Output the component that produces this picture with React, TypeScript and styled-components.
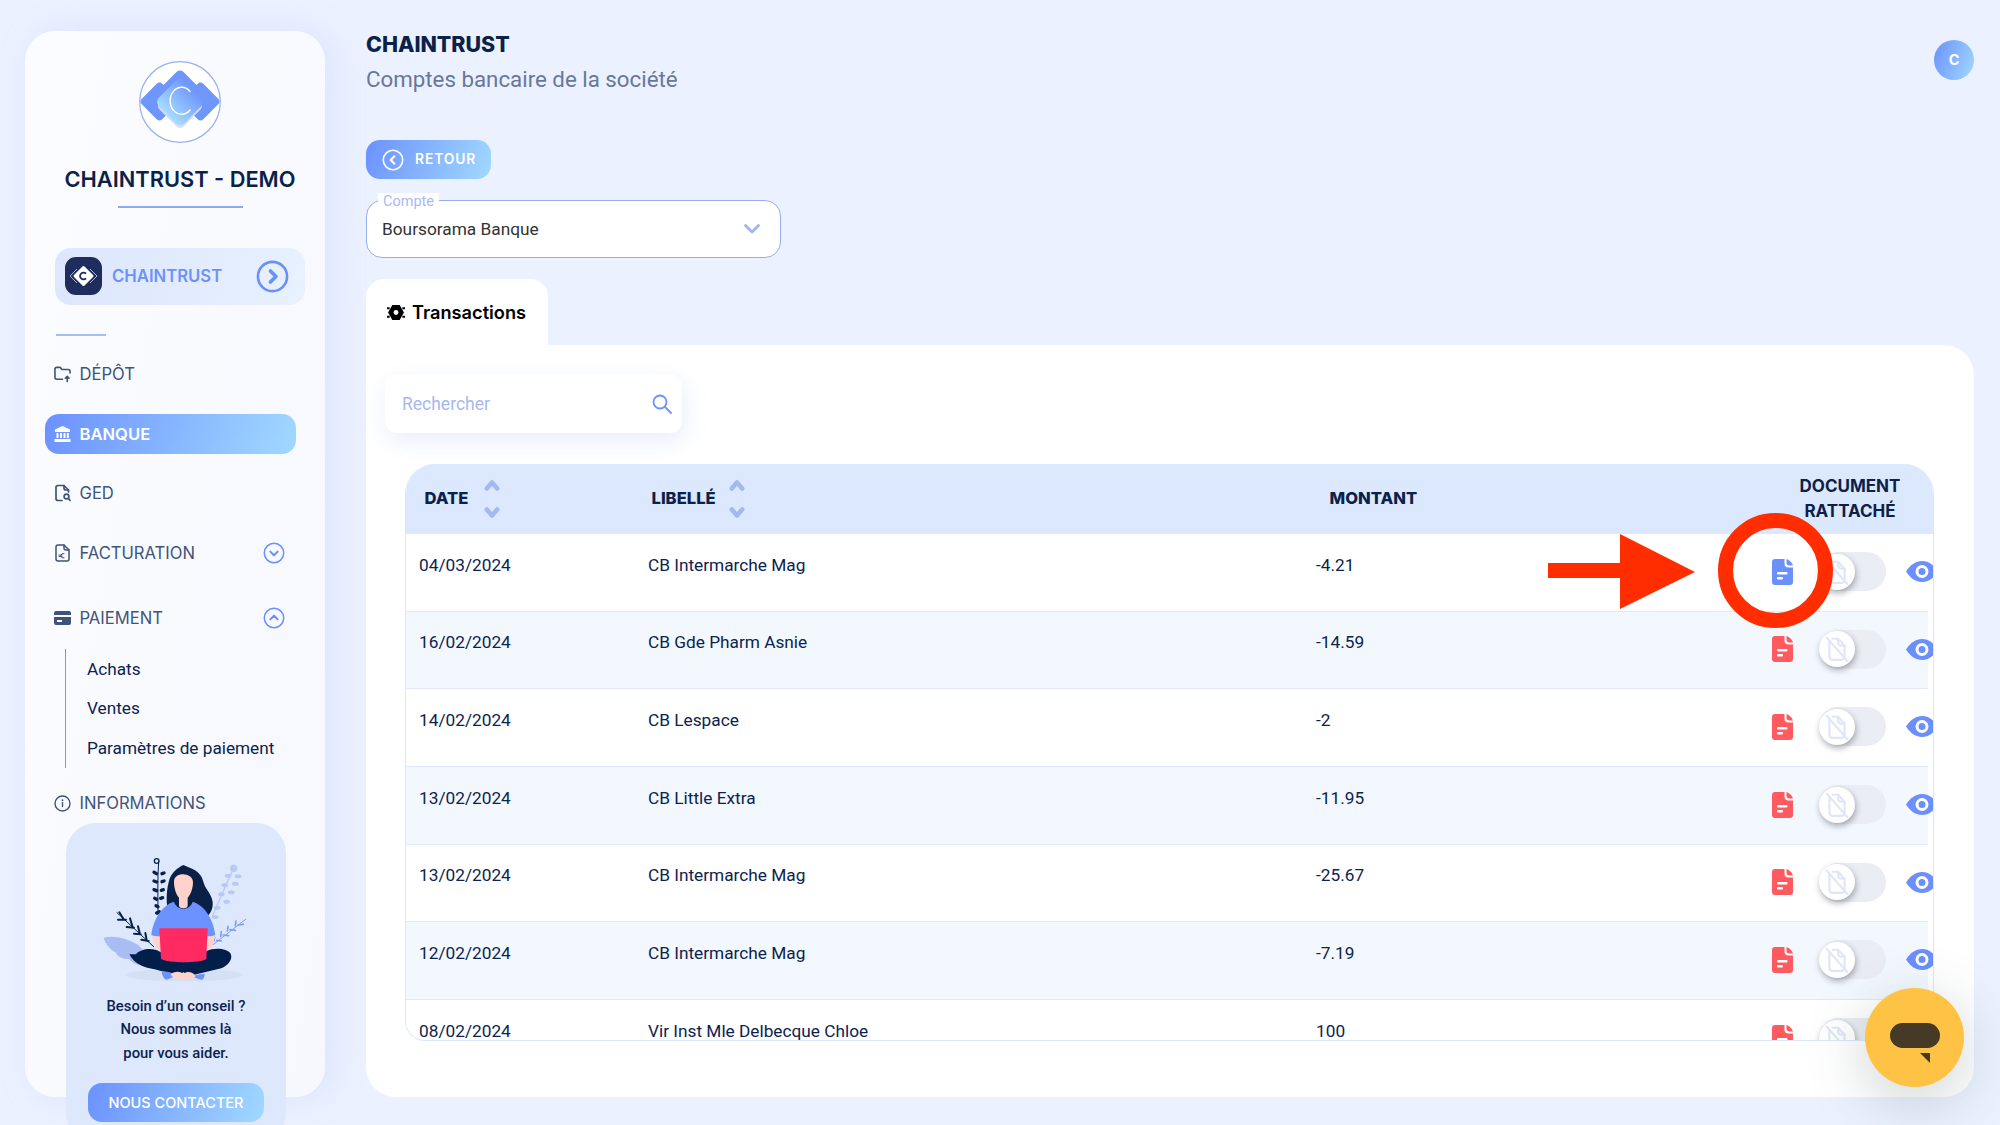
import React from 'react';
import styled, { createGlobalStyle } from 'styled-components';

const GlobalStyles = createGlobalStyle`
    html, body {
        margin: 0;
        padding: 0;
        height: 1125px;
        overflow: hidden;
        background: #ebf1ff;
        font-family: Roboto, 'Liberation Sans', sans-serif;
        color: #0c2350;
    }
    * {
        box-sizing: border-box;
    }
`;

const HEADING = `Inter, 'Open Sans', sans-serif`;
const GRADIENT = 'linear-gradient(110deg, #6b91ff 0%, #a1d9ff 100%)';

const Page = styled.div`
    position: relative;
    display: flex;
    align-items: flex-start;
    width: 2000px;
    height: 1125px;
    overflow: hidden;
`;

const Sidebar = styled.aside`
    flex: none;
    width: 300px;
    height: 1066px;
    margin: 31px 0 0 25px;
    padding: 30px 20px 0 30px;
    border-radius: 30px;
    background: linear-gradient(100deg, #fbfcff 0%, #f7f8fe 100%);
    box-shadow: 8px 0 30px rgba(190, 207, 250, 0.35);
    display: flex;
    flex-direction: column;
    > * {
        flex: none;
    }
`;

const LogoWrap = styled.div`
    display: flex;
    justify-content: center;
`;

const CompanyTitle = styled.h1`
    margin: 18.5px -10px 0;
    font: 600 21.8px/34px ${HEADING};
    color: #0b2149;
    text-align: center;
    white-space: nowrap;
`;

const TitleRule = styled.div`
    width: 125px;
    height: 2px;
    margin: 10.5px auto 0;
    background: #8fa9ef;
`;

const CompanyPill = styled.div`
    display: flex;
    align-items: center;
    width: 250px;
    height: 57px;
    margin-top: 39.5px;
    padding: 0 16px 0 10px;
    border-radius: 16px;
    background: linear-gradient(100deg, #dde6fc 0%, #e7f1ff 100%);
`;

const CompanyBadge = styled.div`
    flex: none;
    width: 37px;
    height: 38px;
    border-radius: 11px;
    background: #1f2d5e;
    display: flex;
    align-items: center;
    justify-content: center;
`;

const CompanyName = styled.span`
    flex: 1;
    margin-left: 10px;
    font: 600 16.7px/1 ${HEADING};
    color: #6b92fb;
`;

const ChevronSlot = styled.span`
    flex: none;
    display: flex;
    color: #6b8ffb;
`;

const ShortRule = styled.div`
    width: 50px;
    height: 2px;
    margin: 29px 0 0 1px;
    background: #a7bcf3;
`;

const Nav = styled.nav`
    display: flex;
    flex-direction: column;
    margin: 18.5px 0 0 -10px;
`;

const NavItem = styled.div<{ $active?: boolean; $mt?: number }>`
    display: flex;
    align-items: center;
    gap: 8.5px;
    width: 251px;
    height: 40px;
    margin-top: ${(p) => p.$mt ?? 0}px;
    padding: 0 11px 0 9px;
    border-radius: 14px;
    background: ${(p) => (p.$active ? GRADIENT : 'transparent')};
    color: ${(p) => (p.$active ? '#fff' : '#40537a')};
    font: ${(p) => (p.$active ? 600 : 400)} 16.6px/1 ${HEADING};
`;

const NavIcon = styled.span`
    flex: none;
    width: 17px;
    height: 18px;
    display: flex;
    align-items: center;
    justify-content: center;
`;

const NavLabel = styled.span`
    flex: 1;
`;

const SubMenu = styled.div`
    display: flex;
    flex-direction: column;
    height: 119px;
    margin: 11px 0 0 20px;
    padding-left: 21px;
    border-left: 1.5px solid #7596f5;
`;

const SubLink = styled.div`
    height: 39.5px;
    display: flex;
    align-items: center;
    font-size: 17.2px;
    color: #0c2350;
`;

const HelpCard = styled.div`
    width: 220px;
    height: 320px;
    margin-left: 11px;
    padding-top: 32px;
    border-radius: 30px;
    background: #dde8fd;
    display: flex;
    flex-direction: column;
    align-items: center;
`;

const HelpText = styled.p`
    margin: 10px 0 0;
    font-size: 14.8px;
    font-weight: 500;
    line-height: 23.4px;
    text-align: center;
    color: #0c2350;
`;

const HelpButton = styled.div`
    width: 176px;
    height: 39px;
    margin-top: 18px;
    border-radius: 14px;
    background: ${GRADIENT};
    color: #fff;
    font: 500 14.5px/39px ${HEADING};
    text-align: center;
`;

const Main = styled.main`
    flex: none;
    width: 1608px;
    margin-left: 41px;
    padding-top: 28px;
    display: flex;
    flex-direction: column;
`;

const Header = styled.header`
    display: flex;
    justify-content: space-between;
    align-items: flex-start;
`;

const PageTitle = styled.h2`
    margin: 0;
    font: 800 21.4px/33px ${HEADING};
    color: #0b2149;
`;

const PageSubtitle = styled.div`
    margin-top: 3px;
    font-size: 22.3px;
    line-height: 30px;
    color: #66789c;
`;

const Avatar = styled.div`
    width: 40px;
    height: 40px;
    margin-top: 12px;
    border-radius: 50%;
    background: ${GRADIENT};
    color: #fff;
    font: 700 14.5px/40px ${HEADING};
    text-align: center;
`;

const BackButton = styled.div`
    display: flex;
    align-items: center;
    gap: 11px;
    width: 125px;
    height: 39px;
    margin-top: 46px;
    padding-left: 16px;
    border-radius: 14px;
    background: ${GRADIENT};
    color: #fff;
    font: 600 13.8px/1 ${HEADING};
    letter-spacing: 0.9px;
`;

const BackLabel = styled.span`
    padding-top: 1px;
`;

const SelectBox = styled.div`
    position: relative;
    display: flex;
    align-items: center;
    justify-content: space-between;
    width: 415px;
    height: 58px;
    margin-top: 21px;
    padding: 0 20px 0 15px;
    border: 1.5px solid #96aef0;
    border-radius: 16px;
    background: #fff;
    font-size: 17.3px;
    color: #333;
`;

const SelectLabel = styled.span`
    position: absolute;
    top: -8px;
    left: 11px;
    padding: 0 5px;
    background: #fff;
    font-size: 14.5px;
    line-height: 17px;
    color: #a9baf0;
`;

const TabBar = styled.div`
    display: flex;
    margin-top: 21px;
`;

const Tab = styled.div`
    display: flex;
    align-items: flex-start;
    gap: 7px;
    width: 182px;
    height: 66px;
    padding: 21px 0 0 21px;
    border-radius: 18px 18px 0 0;
    background: #fff;
    color: #000;
    font: 600 18.2px/24px ${HEADING};
`;

const Card = styled.section`
    height: 752px;
    padding: 29px 40px 0 39px;
    border-radius: 0 30px 30px 30px;
    background: #fff;
`;

const SearchBox = styled.div`
    display: flex;
    align-items: center;
    justify-content: space-between;
    width: 297px;
    height: 59px;
    margin-left: -20px;
    padding: 1px 10px 0 17px;
    border-radius: 12px;
    background: #fff;
    box-shadow: 2px 8px 22px rgba(150, 175, 235, 0.22);
    font-size: 17.5px;
    color: #a6b9f2;
`;

const Table = styled.div`
    width: 1529px;
    height: 577px;
    margin-top: 31px;
    border: solid #dbe7fc;
    border-width: 0 1.5px 1.5px 1.5px;
    border-radius: 30px 30px 20px 20px;
    overflow: hidden;
`;

const HeadRow = styled.div`
    display: grid;
    grid-template-columns: 227px 678px 1fr 168px;
    align-items: center;
    height: 70px;
    margin: 0 -1.5px;
    padding: 0 0 1px 20px;
    background: #dce8fd;
    font: 800 16.6px/25px ${HEADING};
    color: #0b2149;
`;

const HeadCell = styled.div<{ $gap?: number }>`
    display: flex;
    align-items: center;
    gap: ${(p) => p.$gap ?? 16}px;
`;

const DocHead = styled.div`
    margin-left: -1px;
    text-align: center;
    font-size: 17px;
    font-weight: 700;
`;

const SortIcons = styled.span`
    display: flex;
    flex-direction: column;
    gap: 16px;
`;

const Row = styled.div<{ $alt: boolean }>`
    display: grid;
    grid-template-columns: 229px 668px 1fr 156px;
    width: 1522px;
    height: 77.7px;
    padding-left: 13px;
    border-bottom: 1.5px solid #dfe9fb;
    background: ${(p) => (p.$alt ? '#f3f8ff' : '#fff')};
    font-size: 17.25px;
    line-height: 22px;
    color: #0c2350;
`;

const Cell = styled.div`
    padding-top: 19.5px;
`;

const Actions = styled.div`
    display: flex;
    align-items: center;
    height: 75px;
`;

const ToggleTrack = styled.div`
    flex: none;
    width: 67px;
    height: 39px;
    margin: 0 20px 0 26px;
    border-radius: 20px;
    background: #ebedf4;
    display: flex;
    align-items: center;
`;

const ToggleKnob = styled.div`
    width: 36px;
    height: 36px;
    border-radius: 50%;
    background: #fff;
    box-shadow: 1px 3px 6px rgba(40, 40, 60, 0.38);
    display: flex;
    align-items: center;
    justify-content: center;
`;

const Annotation = styled.div`
    position: absolute;
    pointer-events: none;
`;

const ArrowMark = styled(Annotation)`
    left: 1548px;
    top: 533px;
    width: 148px;
    height: 76px;
`;

const CircleMark = styled(Annotation)`
    left: 1718px;
    top: 513px;
    width: 115px;
    height: 115px;
    border: 15px solid #ff2d00;
    border-radius: 50%;
`;

const ChatButton = styled.div`
    position: absolute;
    left: 1865px;
    top: 988px;
    width: 99px;
    height: 99px;
    padding-top: 10px;
    border-radius: 50%;
    background: #fec344;
    box-shadow: 0 14px 60px rgba(50, 80, 70, 0.25);
    display: flex;
    align-items: center;
    justify-content: center;
`;

const ChevronCircle = ({ size, dir, width = 1.6 }: { size: number; dir: 'up' | 'down' | 'left' | 'right'; width?: number }) => {
    const paths = {
        up: 'M8 13.5l4-4 4 4',
        down: 'M8 10.5l4 4 4-4',
        left: 'M13.5 8l-4 4 4 4',
        right: 'M10.5 8l4 4-4 4',
    };
    return (
        <svg width={size} height={size} viewBox="0 0 24 24" fill="none" stroke="currentColor" strokeWidth={width} strokeLinecap="round" strokeLinejoin="round">
            <circle cx="12" cy="12" r="10.6" />
            <path d={paths[dir]} strokeWidth={width * 1.4} />
        </svg>
    );
};

const Logo = () => (
    <svg width="82" height="82" viewBox="0 0 82 82">
        <defs>
            <linearGradient id="front" x1="0" y1="0" x2="0" y2="1">
                <stop offset="0" stopColor="#6f97fb" />
                <stop offset="1" stopColor="#a6dcff" />
            </linearGradient>
        </defs>
        <circle cx="41" cy="41" r="40.3" fill="#fff" stroke="#95aef2" strokeWidth="1.2" />
        <rect x="6" y="26" width="29" height="29" rx="4" transform="rotate(45 20.5 40.5)" fill="#6e96fb" />
        <rect x="47" y="26" width="29" height="29" rx="4" transform="rotate(45 61.5 40.5)" fill="#6e96fb" />
        <rect x="23" y="15" width="36" height="36" rx="5" transform="rotate(45 41 33)" fill="#6f97fb" />
        <rect x="24" y="28" width="34" height="34" rx="5" transform="rotate(45 41 45)" fill="#d4dcf8" />
        <rect x="23" y="23" width="36" height="36" rx="6" transform="rotate(45 41 41)" fill="url(#front)" />
        <path d="M51 30.5A11.5 13.5 0 1 0 51 49" fill="none" stroke="#fff" strokeWidth="1.4" strokeLinecap="round" />
    </svg>
);

const BadgeMark = () => (
    <svg width="31" height="24" viewBox="0 0 31 24">
        <path d="M9 5l-7 7 7 7M22 5l7 7-7 7" fill="none" stroke="#a9b3cf" strokeWidth="1" />
        <rect x="8" y="4.5" width="15" height="15" rx="1.5" transform="rotate(45 15.5 12)" fill="#fff" />
        <path d="M18 9.7a3.4 3.4 0 1 0 0 4.6" fill="none" stroke="#1f2d5e" strokeWidth="1.8" />
    </svg>
);

const IconStroke = { fill: 'none', stroke: 'currentColor', strokeWidth: 1.7, strokeLinecap: 'round', strokeLinejoin: 'round' } as const;

const FolderIcon = () => (
    <svg width="18" height="18" viewBox="0 0 18 18" {...IconStroke}>
        <path d="M9 14.5H3a2 2 0 0 1-2-2V4a2 2 0 0 1 2-2h3.5l2 2.2H15a2 2 0 0 1 2 2V8" />
        <path d="M14 17v-5M12 13.5l2-2 2 2" />
    </svg>
);

const BankIcon = () => (
    <svg width="17" height="16" viewBox="0 0 17 16" fill="currentColor">
        <path d="M8.5 0L16 3.6V6H1V3.6z" />
        <path d="M2.5 7h2v5h-2zM6 7h2v5H6zM9.5 7h2v5h-2zM12.8 7h2v5h-2zM.5 13h16v3H.5z" />
    </svg>
);

const SearchDocIcon = () => (
    <svg width="16" height="18" viewBox="0 0 16 18" {...IconStroke}>
        <path d="M7 16.5H3a2 2 0 0 1-2-2v-11a2 2 0 0 1 2-2h6l4.5 4.5V8" />
        <path d="M9 1.5V4a2 2 0 0 0 2 2h2.5" />
        <circle cx="11.5" cy="12.5" r="2.4" />
        <path d="M13.5 14.7l1.5 1.6" />
    </svg>
);

const EuroDocIcon = () => (
    <svg width="15" height="18" viewBox="0 0 15 18" {...IconStroke} strokeWidth={1.5}>
        <path d="M3 1h6l5 5v9a2 2 0 0 1-2 2H3a2 2 0 0 1-2-2V3a2 2 0 0 1 2-2z" />
        <path d="M9 1v3a2 2 0 0 0 2 2h3" />
        <path d="M9 9.5a2.5 2.5 0 0 0-3 2.2 2.5 2.5 0 0 0 3 2.3M4 11h3M4 12.5h3" strokeWidth={1} />
    </svg>
);

const CardIcon = () => (
    <svg width="17" height="14" viewBox="0 0 17 14" fill="currentColor">
        <path d="M2 0h13a2 2 0 0 1 2 2v2H0V2a2 2 0 0 1 2-2zM0 6h17v6a2 2 0 0 1-2 2H2a2 2 0 0 1-2-2zm3 3v2h5V9z" fillRule="evenodd" />
    </svg>
);

const InfoIcon = () => (
    <svg width="17" height="17" viewBox="0 0 17 17" {...IconStroke} strokeWidth={1.4}>
        <circle cx="8.5" cy="8.5" r="7.5" />
        <path d="M8.5 7.6v4" />
        <path d="M8.5 5.1v.2" strokeWidth={1.8} />
    </svg>
);

const Illustration = () => (
    <svg width="150" height="130" viewBox="185 170 450 390">
        <ellipse cx="435" cy="530" rx="175" ry="19" fill="#d5e0f3" />
        <path d="M193 418c30-8 70 2 100 20 20 12 30 40 28 62-20 4-42-6-52-18-14 2-36-6-40-20-14-6-32-26-36-44z" fill="#a9bdf5" />
        <g stroke="#b9c9f5" strokeWidth="6" fill="#b9c9f5" strokeLinecap="round">
            <path d="M580 215l-62 140" fill="none" strokeWidth="4" />
            <ellipse cx="583" cy="210" rx="8" ry="8" />
            <ellipse cx="596" cy="234" rx="7" ry="3" />
            <ellipse cx="566" cy="232" rx="7" ry="3" />
            <ellipse cx="588" cy="256" rx="7" ry="3" />
            <ellipse cx="556" cy="260" rx="7" ry="3" />
            <ellipse cx="576" cy="282" rx="7" ry="3" />
            <ellipse cx="546" cy="288" rx="7" ry="3" />
            <ellipse cx="562" cy="310" rx="7" ry="3" />
            <ellipse cx="534" cy="328" rx="7" ry="3" />
            <ellipse cx="528" cy="356" rx="7" ry="3" />
        </g>
        <path d="M620 362l-100 78" stroke="#7d9dfb" strokeWidth="3" fill="none" />
        <g stroke="#7d9dfb" strokeWidth="5" strokeLinecap="round">
            <path d="M596 380l16 -2M590 368l-2 14M572 394l16 2M566 384l-2 14M552 410l16 2M546 400l-2 14M532 426l14 2M526 416l-2 12" />
        </g>
        <path d="M232 342l112 104" stroke="#0a2147" strokeWidth="3" fill="none" />
        <g stroke="#0a2147" strokeWidth="6" strokeLinecap="round">
            <path d="M236 364l24 0M240 342l14 22M262 386l22 2M272 360l8 26M284 406l20 2M296 384l6 24M306 424l22 4M318 404l4 22" />
        </g>
        <path d="M358 190c-4 50-2 110-2 160" stroke="#0a2147" strokeWidth="3" fill="none" />
        <circle cx="352" cy="188" r="7" fill="none" stroke="#0a2147" strokeWidth="4" />
        <g stroke="#0a2147" strokeWidth="10" strokeLinecap="round">
            <path d="M344 222l8 4M368 226l6 -2M344 248l8 3M368 250l6 -2M344 274l8 3M366 276l6 -2M346 300l6 3M364 300l6 -2M352 344l8 -4M350 322l6 3" />
        </g>
        <path d="M432 200c22 10 52 16 60 50 6 24 26 36 28 62 2 20-8 38-20 44l-112-10c-8-26-8-64 0-94 6-30 28-44 44-52z" fill="#0a2147" />
        <path d="M404 250c0-14 12-22 27-22s30 8 30 24c0 20-8 38-16 46v24c0 10-26 10-26 0v-24c-8-8-15-28-15-48z" fill="#ffd2cb" />
        <path d="M336 410c4-40 30-90 68-100 8 28 48 28 56 0 34 10 62 50 68 100l-28 10H364z" fill="#6b92ff" />
        <path d="M338 414h26v40h-12zM504 414h24l-12 40h-12z" fill="#ffd2cb" />
        <path d="M290 468c12-16 50-22 72-8l70 32 70-34c24-12 62-8 72 8 8 18-10 36-28 44l-94 22-20-10-20 10-60-18c-26-4-66-12-82-46z" fill="#021e4a" />
        <path d="M368 518c20 2 38 6 40 16l-26 10c-8 0-16-16-14-26zM496 526c-16 2-30 2-36 10l26 8c6 0 10-8 10-18z" fill="#6b92ff" />
        <path d="M394 526c14-8 28-8 38 0 12-8 28-6 36 6 0 8-14 10-34 10-22 0-38-4-40-16z" fill="#ffd2cb" />
        <path d="M360 390h145l-4 92c-18 12-110 14-136 0z" fill="#ff2a62" />
    </svg>
);

const DocIcon = ({ color }: { color: string }) => (
    <svg width="21" height="26" viewBox="0 0 21 26" style={{ flex: 'none' }}>
        <path d="M3 0h9.5v4.5a4 4 0 0 0 4 4H21V23a3 3 0 0 1-3 3H3a3 3 0 0 1-3-3V3a3 3 0 0 1 3-3z" fill={color} />
        <path d="M14.5 0c3 1 5.5 3.5 6.5 6.5h-3.5a3 3 0 0 1-3-3z" fill={color} />
        <rect x="5" y="13" width="10.5" height="2.4" rx="1" fill="#fff" />
        <rect x="5" y="18" width="6" height="2.4" rx="1" fill="#fff" />
    </svg>
);

const NoDocIcon = () => (
    <svg width="24" height="26" viewBox="0 0 22 24" fill="none" stroke="#dfe6f7" strokeWidth="2" strokeLinecap="round" strokeLinejoin="round">
        <path d="M4 4.5V19a3 3 0 0 0 3 3h8a3 3 0 0 0 3-3V9l-6-6.5H7" />
        <path d="M12 2.5V6a3 3 0 0 0 3 3h3" />
        <path d="M1.5 1.5L20.5 23" />
    </svg>
);

const EyeIcon = () => (
    <svg width="32" height="21" viewBox="0 0 32 21" style={{ flex: 'none' }}>
        <path d="M0 10.5C4.5 3.5 10 0 16 0s11.500 3.5 16 10.5C27.500 17.5 22 21 16 21S4.5 17.5 0 10.5z" fill="#6b8ffb" />
        <circle cx="16" cy="10.5" r="5" fill="none" stroke="#fff" strokeWidth="3" />
    </svg>
);

const SortArrows = () => (
    <SortIcons>
        <svg width="16" height="12" viewBox="0 0 16 12" fill="none" stroke="#a5b8f0" strokeWidth="4.5" strokeLinejoin="round" strokeLinecap="round">
            <path d="M2.8 9.5L8 3.5l5.2 6" />
        </svg>
        <svg width="16" height="12" viewBox="0 0 16 12" fill="none" stroke="#a5b8f0" strokeWidth="4.5" strokeLinejoin="round" strokeLinecap="round">
            <path d="M2.8 2.5L8 8.5l5.2-6" />
        </svg>
    </SortIcons>
);

const TabIcon = () => (
    <svg width="18" height="15" viewBox="0 0 17 14" style={{ marginTop: 5, flex: 'none' }}>
        <path d="M5 0h7l4 7-4 7H5L1 7z" fill="#000" />
        <circle cx="8.5" cy="7" r="2.3" fill="#fff" />
        <path d="M0 3h2.5M14.5 3H17M0 11h2.5M14.5 11H17" stroke="#000" strokeWidth="2" />
    </svg>
);

const transactions = [
    { date: '04/03/2024', label: 'CB Intermarche Mag', amount: '-4.21' },
    { date: '16/02/2024', label: 'CB Gde Pharm Asnie', amount: '-14.59' },
    { date: '14/02/2024', label: 'CB Lespace', amount: '-2' },
    { date: '13/02/2024', label: 'CB Little Extra', amount: '-11.95' },
    { date: '13/02/2024', label: 'CB Intermarche Mag', amount: '-25.67' },
    { date: '12/02/2024', label: 'CB Intermarche Mag', amount: '-7.19' },
    { date: '08/02/2024', label: 'Vir Inst Mle Delbecque Chloe', amount: '100' },
];

function App() {
    return (
        <Page>
            <GlobalStyles />
            <Sidebar>
                <LogoWrap>
                    <Logo />
                </LogoWrap>
                <CompanyTitle>CHAINTRUST - DEMO</CompanyTitle>
                <TitleRule />
                <CompanyPill>
                    <CompanyBadge>
                        <BadgeMark />
                    </CompanyBadge>
                    <CompanyName>CHAINTRUST</CompanyName>
                    <ChevronSlot>
                        <ChevronCircle size={33} dir="right" width={1.9} />
                    </ChevronSlot>
                </CompanyPill>
                <ShortRule />
                <Nav>
                    <NavItem>
                        <NavIcon><FolderIcon /></NavIcon>
                        <NavLabel>DÉPÔT</NavLabel>
                    </NavItem>
                    <NavItem $active $mt={20}>
                        <NavIcon><BankIcon /></NavIcon>
                        <NavLabel>BANQUE</NavLabel>
                    </NavItem>
                    <NavItem $mt={19}>
                        <NavIcon><SearchDocIcon /></NavIcon>
                        <NavLabel>GED</NavLabel>
                    </NavItem>
                    <NavItem $mt={20}>
                        <NavIcon><EuroDocIcon /></NavIcon>
                        <NavLabel>FACTURATION</NavLabel>
                        <ChevronSlot>
                            <ChevronCircle size={22} dir="down" />
                        </ChevronSlot>
                    </NavItem>
                    <NavItem $mt={25}>
                        <NavIcon><CardIcon /></NavIcon>
                        <NavLabel>PAIEMENT</NavLabel>
                        <ChevronSlot>
                            <ChevronCircle size={22} dir="up" />
                        </ChevronSlot>
                    </NavItem>
                    <SubMenu>
                        <SubLink>Achats</SubLink>
                        <SubLink>Ventes</SubLink>
                        <SubLink>Paramètres de paiement</SubLink>
                    </SubMenu>
                    <NavItem $mt={15}>
                        <NavIcon><InfoIcon /></NavIcon>
                        <NavLabel>INFORMATIONS</NavLabel>
                    </NavItem>
                </Nav>
                <HelpCard>
                    <Illustration />
                    <HelpText>
                        Besoin d’un conseil ?<br />
                        Nous sommes là<br />
                        pour vous aider.
                    </HelpText>
                    <HelpButton>NOUS CONTACTER</HelpButton>
                </HelpCard>
            </Sidebar>

            <Main>
                <Header>
                    <div>
                        <PageTitle>CHAINTRUST</PageTitle>
                        <PageSubtitle>Comptes bancaire de la société</PageSubtitle>
                    </div>
                    <Avatar>C</Avatar>
                </Header>

                <BackButton>
                    <ChevronCircle size={22} dir="left" width={1.7} />
                    <BackLabel>RETOUR</BackLabel>
                </BackButton>

                <SelectBox>
                    <SelectLabel>Compte</SelectLabel>
                    Boursorama Banque
                    <svg width="16" height="10" viewBox="0 0 16 10" fill="none" stroke="#9db4f0" strokeWidth="2.8" strokeLinecap="round" strokeLinejoin="round">
                        <path d="M1.5 1.5L8 8l6.5-6.5" />
                    </svg>
                </SelectBox>

                <TabBar>
                    <Tab>
                        <TabIcon />
                        Transactions
                    </Tab>
                </TabBar>

                <Card>
                    <SearchBox>
                        Rechercher
                        <svg width="20" height="20" viewBox="0 0 20 20" fill="none" stroke="#6b92fb" strokeWidth="1.8" strokeLinecap="round">
                            <circle cx="8" cy="8" r="6.5" />
                            <path d="M13 13l6 6" />
                        </svg>
                    </SearchBox>
                    <Table>
                        <HeadRow>
                            <HeadCell>DATE <SortArrows /></HeadCell>
                            <HeadCell $gap={13}>LIBELLÉ <SortArrows /></HeadCell>
                            <HeadCell>MONTANT</HeadCell>
                            <DocHead>DOCUMENT<br />RATTACHÉ</DocHead>
                        </HeadRow>
                        {transactions.map((t, i) => (
                            <Row key={i} $alt={i % 2 === 1}>
                                <Cell>{t.date}</Cell>
                                <Cell>{t.label}</Cell>
                                <Cell>{t.amount}</Cell>
                                <Actions>
                                    <DocIcon color={i === 0 ? '#6b8ffb' : '#ff5a5f'} />
                                    <ToggleTrack>
                                        <ToggleKnob>
                                            <NoDocIcon />
                                        </ToggleKnob>
                                    </ToggleTrack>
                                    <EyeIcon />
                                </Actions>
                            </Row>
                        ))}
                    </Table>
                </Card>
            </Main>

            <ArrowMark>
                <svg width="148" height="76" viewBox="0 0 148 76">
                    <path d="M0 30h72V1l75 38-75 37V45H0z" fill="#ff2d00" />
                </svg>
            </ArrowMark>
            <CircleMark />

            <ChatButton>
                <svg width="50" height="40" viewBox="0 0 50 40">
                    <rect x="0" y="0" width="50" height="25" rx="12.5" fill="#463a26" />
                    <path d="M30 30h10v10z" fill="#463a26" />
                </svg>
            </ChatButton>
        </Page>
    );
}

export default App;
